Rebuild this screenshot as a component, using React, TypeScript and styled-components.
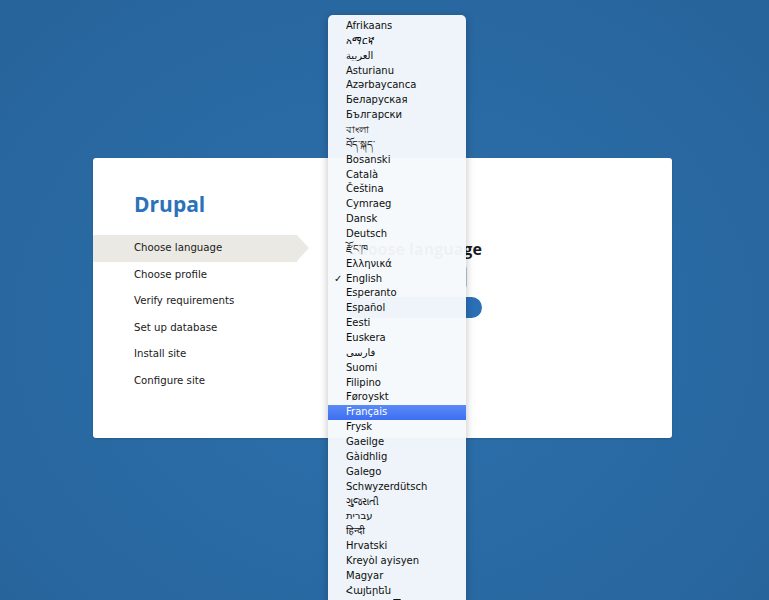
import React from 'react';
import styled, { createGlobalStyle } from 'styled-components';

const GlobalStyle = createGlobalStyle`
    html, body {
        margin: 0;
        padding: 0;
        height: 600px;
        overflow: hidden;
    }
    body {
        font-family: "DejaVu Sans", "Noto Sans", sans-serif;
        background: radial-gradient(ellipse at 50% 55%, #2d71ad 0%, #2a6ba5 45%, #27639b 100%);
    }
`

const Page = styled.div`
    position: relative;
    height: 600px;
    padding-top: 158px;
    box-sizing: border-box;
`
const Card = styled.div`
    display: flex;
    width: 579px;
    height: 280px;
    margin: 0 0 0 93px;
    background: #fff;
    border-radius: 3px;
    box-shadow: 0 1px 2px rgba(0, 0, 0, 0.15);
`
const Sidebar = styled.div`
    width: 216px;
    padding-top: 34px;
    flex-shrink: 0;
`
const Logo = styled.div`
    padding-left: 41px;
    height: 43px;
    font-family: "Open Sans", sans-serif;
    font-weight: 700;
    font-size: 21px;
    line-height: 24px;
    color: #2b72ba;
`
const Steps = styled.ul`
    list-style: none;
    margin: 0;
    padding: 0;
`
const Step = styled.li<{ $active?: boolean }>`
    position: relative;
    height: 26.5px;
    line-height: 26px;
    padding-left: 41px;
    font-size: 10.2px;
    color: #1a1a1a;
    width: 204px;
    box-sizing: border-box;
    background: ${p => (p.$active ? '#ebe9e4' : 'transparent')};
    &::after {
        content: '';
        display: ${p => (p.$active ? 'block' : 'none')};
        position: absolute;
        right: -12px;
        top: 0;
        border-top: 13px solid transparent;
        border-bottom: 13px solid transparent;
        border-left: 12px solid #ebe9e4;
    }
`
const Main = styled.div`
    flex: 1;
    padding: 80px 0 0 38px;
`
const Heading = styled.h2`
    margin: 0 0 5px;
    font-family: "Open Sans", sans-serif;
    font-weight: 700;
    font-size: 16px;
    line-height: 22px;
    color: #1a1a1a;
`
const SelectBox = styled.div`
    width: 118px;
    height: 22px;
    border: 1px solid #b8c7d8;
    border-radius: 4px;
    margin-bottom: 8px;
`
const Button = styled.div`
    width: 135px;
    height: 21px;
    border-radius: 11px;
    background: #2b6fb6;
`
const Menu = styled.div`
    position: absolute;
    left: 328px;
    top: 15px;
    width: 138px;
    height: 590px;
    padding-top: 4px;
    box-sizing: border-box;
    background: rgba(246, 249, 252, 0.965);
    border-radius: 5px 5px 0 0;
    box-shadow: 0 2px 8px rgba(0, 0, 0, 0.25);
    overflow: hidden;
`
const Option = styled.div<{ $selected?: boolean }>`
    position: relative;
    height: 14.86px;
    line-height: 14.86px;
    padding-left: 18px;
    font-size: 10px;
    white-space: nowrap;
    color: ${p => (p.$selected ? '#fff' : '#0d0d0d')};
    background: ${p => (p.$selected ? 'linear-gradient(#5a8bf7, #3e6ef2)' : 'transparent')};
`
const Check = styled.span`
    position: absolute;
    left: 6px;
    top: 0;
    font-size: 10px;
`
const ScrollArrow = styled.div`
    position: absolute;
    left: 65px;
    bottom: 0;
    width: 0;
    height: 0;
    border-left: 4px solid transparent;
    border-right: 4px solid transparent;
    border-top: 6px solid #111;
`

const steps = ['Choose language', 'Choose profile', 'Verify requirements', 'Set up database', 'Install site', 'Configure site'];

const languages = [
    'Afrikaans', 'አማርኛ', 'العربية', 'Asturianu', 'Azərbaycanca', 'Беларуская', 'Български', 'বাংলা', 'བོད་སྐད་',
    'Bosanski', 'Català', 'Čeština', 'Cymraeg', 'Dansk', 'Deutsch', 'རྫོང་ཁ', 'Ελληνικά', 'English', 'Esperanto',
    'Español', 'Eesti', 'Euskera', 'فارسی', 'Suomi', 'Filipino', 'Føroyskt', 'Français', 'Frysk', 'Gaeilge',
    'Gàidhlig', 'Galego', 'Schwyzerdütsch', 'ગુજરાતી', 'עברית', 'हिन्दी', 'Hrvatski', 'Kreyòl ayisyen', 'Magyar', 'Հայերեն',
];

const App: React.FC = () => {
    return (
        <Page>
            <GlobalStyle />
            <Card>
                <Sidebar>
                    <Logo>Drupal</Logo>
                    <Steps>
                        {steps.map((s, i) => (
                            <Step key={s} $active={i === 0}>{s}</Step>
                        ))}
                    </Steps>
                </Sidebar>
                <Main>
                    <Heading>Choose language</Heading>
                    <SelectBox />
                    <Button />
                </Main>
            </Card>
            <Menu>
                {languages.map(l => (
                    <Option key={l} $selected={l === 'Français'}>
                        {l === 'English' && <Check>✓</Check>}
                        {l}
                    </Option>
                ))}
                <ScrollArrow />
            </Menu>
        </Page>
    )
}

export default App;
